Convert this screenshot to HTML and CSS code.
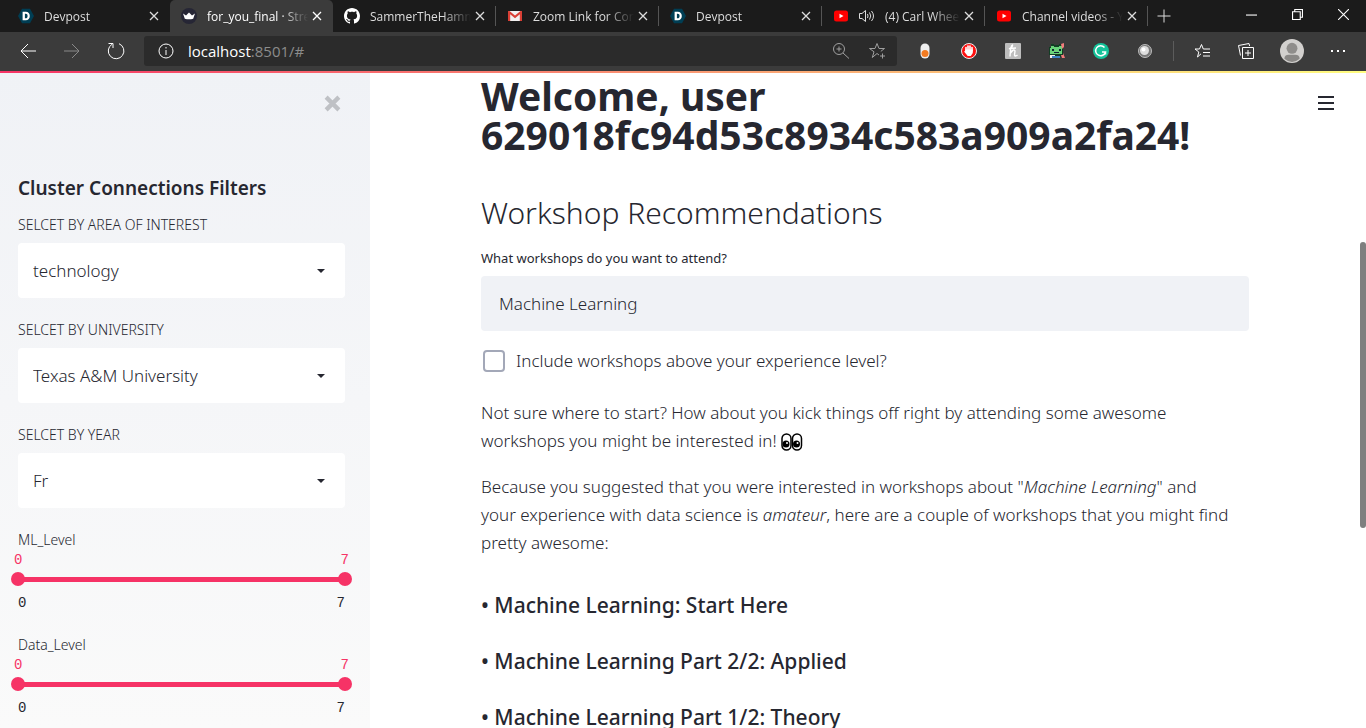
FILE: index.html
```html
<!DOCTYPE html>
<html lang="en">
<head>
  <meta charset="UTF-8" />
  <meta name="viewport" content="width=device-width, initial-scale=1" />
  <title>for_you_final · Streamlit</title>
  <link rel="stylesheet" href="styles.css">
</head>
<body>
  <!-- shared icons -->
  <svg class="sprite" aria-hidden="true">
    <symbol id="devpost" viewBox="0 0 16 16">
      <path d="M4 .8h8L16 8l-4 7.200H4L0 8z" fill="#003e54" />
      <path fill-rule="evenodd" d="M4.600 3.800h3.200c2.500 0 4 1.600 4 4.200s-1.500 4.200-4 4.200H4.600zM6.900 5.700v4.600h.8c1.200 0 1.900-.8 1.900-2.300s-.7-2.300-1.900-2.300z" fill="#fff" />
    </symbol>
    <symbol id="youtube" viewBox="0 0 16 16">
      <rect x="1" y="2.500" width="14" height="11" rx="2.500" fill="#f00" />
      <path d="M6.500 5.700v4.600l4-2.300z" fill="#fff" />
    </symbol>
    <symbol id="close" viewBox="0 0 10 10">
      <path d="M1 1l8 8M9 1l-8 8" stroke="currentColor" stroke-width="1.300" fill="none" />
    </symbol>
  </svg>

  <header class="browser">
    <div class="tabs">
      <div class="tab">
        <svg class="favicon"><use href="#devpost" /></svg>
        <span class="tab-title">Devpost</span>
        <button class="tab-close" aria-label="Close tab"><svg><use href="#close" /></svg></button>
      </div>
      <div class="tab active">
        <svg class="favicon" viewBox="0 0 16 16">
          <circle cx="8" cy="8" r="8" fill="#262635" />
          <path d="M2 5.500l3 2 3-3 3 3 3-2-1.800 5.200q-4.200 1-8.400 0z" fill="#fff" />
        </svg>
        <span class="tab-title">for_you_final · Stre</span>
        <button class="tab-close" aria-label="Close tab"><svg><use href="#close" /></svg></button>
      </div>
      <div class="tab">
        <svg class="favicon" viewBox="0 0 16 16">
          <path fill="#fff" d="M8 0C3.580 0 0 3.580 0 8c0 3.540 2.290 6.530 5.470 7.590.4.070.55-.17.55-.38 0-.19-.01-.82-.01-1.490-2.010.37-2.530-.49-2.690-.94-.09-.23-.48-.94-.82-1.130-.28-.15-.68-.52-.01-.53.63-.01 1.080.58 1.230.82.72 1.210 1.870.87 2.330.66.070-.52.28-.87.51-1.070-1.780-.2-3.640-.89-3.640-3.950 0-.87.31-1.590.82-2.150-.08-.2-.36-1.020.08-2.120 0 0 .67-.21 2.200.82.64-.18 1.320-.27 2-.27s1.360.09 2 .27c1.530-1.040 2.200-.82 2.200-.82.44 1.100.16 1.920.08 2.120.51.56.82 1.270.82 2.150 0 3.070-1.870 3.750-3.650 3.950.29.25.54.73.54 1.480 0 1.070-.01 1.930-.01 2.200 0 .21.15.46.55.38A8.010 8.010 0 0 0 16 8c0-4.420-3.580-8-8-8z" />
        </svg>
        <span class="tab-title">SammerTheHamm</span>
        <button class="tab-close" aria-label="Close tab"><svg><use href="#close" /></svg></button>
      </div>
      <div class="tab">
        <svg class="favicon" viewBox="0 0 16 16">
          <path d="M1 3h14v10H1z" fill="#f1f1f1" />
          <path d="M1 13V3h1.500L8 7.500 13.500 3H15v10h-2.200V6.300L8 10.200 3.200 6.300V13z" fill="#d93f35" />
        </svg>
        <span class="tab-title">Zoom Link for Con</span>
        <button class="tab-close" aria-label="Close tab"><svg><use href="#close" /></svg></button>
      </div>
      <div class="tab">
        <svg class="favicon"><use href="#devpost" /></svg>
        <span class="tab-title">Devpost</span>
        <button class="tab-close" aria-label="Close tab"><svg><use href="#close" /></svg></button>
      </div>
      <div class="tab">
        <svg class="favicon"><use href="#youtube" /></svg>
        <svg class="favicon" viewBox="0 0 16 16" fill="none" stroke="#ddd">
          <path d="M.5 5.500v5h2.500l3.500 3v-11l-3.500 3zM8.500 6q1 2 0 4M10.500 4.500q2.500 3.500 0 7M12.500 3q4 5 0 10" />
        </svg>
        <span class="tab-title">(4) Carl Whee</span>
        <button class="tab-close" aria-label="Close tab"><svg><use href="#close" /></svg></button>
      </div>
      <div class="tab">
        <svg class="favicon"><use href="#youtube" /></svg>
        <span class="tab-title">Channel videos - Y</span>
        <button class="tab-close" aria-label="Close tab"><svg><use href="#close" /></svg></button>
      </div>
      <button class="new-tab" aria-label="New tab">
        <svg viewBox="0 0 14 14"><path d="M7 .5v13M.5 7h13" /></svg>
      </button>
      <div class="window-controls">
        <button aria-label="Minimize"><svg viewBox="0 0 10 10"><path d="M0 5.500h10" /></svg></button>
        <button aria-label="Restore"><svg viewBox="0 0 10 10"><path d="M.5 2.500h7v7h-7zM2.500 2.500v-2h7v7h-2" /></svg></button>
        <button aria-label="Close"><svg viewBox="0 0 10 10"><path d="M0 0l10 10M10 0L0 10" /></svg></button>
      </div>
    </div>

    <div class="toolbar">
      <div class="nav">
        <button aria-label="Back"><svg viewBox="0 0 20 20"><path d="M18 10H3M10 3l-7 7 7 7" /></svg></button>
        <button aria-label="Forward" disabled><svg viewBox="0 0 20 20"><path d="M2 10h15M10 3l7 7-7 7" /></svg></button>
        <button aria-label="Refresh"><svg viewBox="0 0 20 20"><path d="M13 2.700A7.800 7.800 0 1 1 6 3.300M2.500 2.500h4.500v4.500" /></svg></button>
      </div>
      <div class="address">
        <svg class="tool-icon" viewBox="0 0 20 20"><circle cx="10" cy="10" r="7" /><path d="M10 9v5M10 6v1.500" /></svg>
        <a class="url" href="#">localhost<span>:8501/#</span></a>
        <button class="dim" aria-label="Zoom"><svg viewBox="0 0 20 20"><circle cx="8" cy="8" r="5.500" /><path d="M12 12l6 5.500M8 5.500v5M5.500 8h5" /></svg></button>
        <button class="dim" aria-label="Add to favorites"><svg viewBox="0 0 20 20"><path d="M12 14l-2-1.500L5.300 16.500l1.700-5.700L2.500 7.500h5.500L10 2.500l2 5h5.500l-3.700 2.900M15.500 12.500v5M13 15h5" /></svg></button>
      </div>
      <div class="extensions">
        <button aria-label="Toggle extension"><svg viewBox="0 0 20 20"><rect x="5.500" y="2.500" width="9" height="15" rx="4.500" fill="#eee" stroke="none" /><circle cx="10" cy="12.500" r="3.500" fill="#f47b20" stroke="none" /></svg></button>
        <button aria-label="Ad blocker"><svg viewBox="0 0 20 20"><circle cx="10" cy="10" r="7.500" fill="#f11" stroke="#eee" /><path d="M7 10V6.500M9 9V5M11 9V5M13 10V6.500" stroke="#fff" stroke-width="1.600" stroke-linecap="round" /><path d="M6.200 8.500h7.600v3.500l-2 3H8.700l-3.700-4.500 1.200-.5z" fill="#fff" stroke="none" /></svg></button>
        <button aria-label="Honey"><svg viewBox="0 0 20 20"><rect x="2" y="2" width="16" height="16" rx="1" fill="#bdbdbd" stroke="none" /><path d="M6 8q4-2 3.500-4-2 0-2.500 11.500M7.500 12q3.500-5 4.500-2l-.5 4q.5 2 3 0M6.500 7.500l6.500-.5" stroke="#fff" stroke-width="1.400" /></svg></button>
        <button aria-label="Pixel frog"><svg viewBox="0 0 20 20"><path d="M4 3h3v1h5V3h3v2h1v9h-2v2H4v-2H2V6h2z" fill="#123d24" stroke="none" /><path d="M4 5h3v1h5V5h3v8H3V7h1z" fill="#69d27a" stroke="none" /><path d="M5 8h2v2H5zM12 8h2v2h-2zM7 11h5v1H7z" fill="#123" stroke="none" /><path d="M3 14h5v3H3z" fill="#eee" stroke="none" /><path d="M5 15h8v2H5z" fill="#3d83c5" stroke="none" /><path d="M14 3l3-1v4l-2 2zM14 14h2v-2l2 5h-3z" fill="#f47c7c" stroke="none" /></svg></button>
        <button aria-label="Grammarly"><svg viewBox="0 0 20 20"><circle cx="10" cy="10" r="8" fill="#15c39a" stroke="none" /><path d="M13.500 6.500a5 5 0 1 0 1 4.500h-3.500M14.500 11v2.500" stroke="#fff" stroke-width="1.500" /></svg></button>
        <button aria-label="Sphere"><svg viewBox="0 0 20 20"><circle cx="10" cy="10" r="6.500" fill="#777" stroke="#bbb" /><circle cx="9.500" cy="9.500" r="4.500" fill="#ddd" stroke="none" /><circle cx="8.500" cy="8.500" r="2" fill="#fff" stroke="none" /></svg></button>
      </div>
      <div class="profile-tools">
        <button aria-label="Favorites"><svg viewBox="0 0 20 20"><path d="M9 12.800L5.500 16l1.300-5L3 8h4.500L9.500 3.500 11.300 8H18M11 11.500h7M11 15h7" /></svg></button>
        <button aria-label="Collections"><svg viewBox="0 0 20 20"><path d="M6.500 6.500h11v11h-11zM12 9v6M9 12h6M4.500 14.500l-2-10L13 2.500l.6 2.500" /></svg></button>
        <button class="avatar" aria-label="Profile"><svg viewBox="0 0 22 22"><circle cx="11" cy="11" r="11" fill="#d2d0ce" stroke="none" /><circle cx="11" cy="8.500" r="5" fill="#8f8d8b" stroke="none" /><path d="M4 18q0-3.500 4-3.500h6q4 0 4 3.500-7 6-14 0z" fill="#8a8886" stroke="none" /></svg></button>
        <button aria-label="Settings and more"><svg viewBox="0 0 20 20"><path d="M3 9h2v2H3zM9 9h2v2H9zM15 9h2v2h-2z" fill="#fff" stroke="none" /></svg></button>
      </div>
    </div>
  </header>

  <div class="app">
    <aside class="sidebar">
      <button class="sidebar-close" aria-label="Close sidebar">
        <svg viewBox="0 0 16 16"><path d="M2 2l12 12M14 2L2 14" /></svg>
      </button>
      <h3>Cluster Connections Filters</h3>

      <div class="field">
        <label for="interest">SELCET BY AREA OF INTEREST</label>
        <div class="select">
          <select id="interest"><option>technology</option></select>
        </div>
      </div>
      <div class="field">
        <label for="university">SELCET BY UNIVERSITY</label>
        <div class="select">
          <select id="university"><option>Texas A&amp;M University</option></select>
        </div>
      </div>
      <div class="field">
        <label for="year">SELCET BY YEAR</label>
        <div class="select">
          <select id="year"><option>Fr</option></select>
        </div>
      </div>

      <div class="field">
        <label for="ml-min">ML_Level</label>
        <div class="slider">
          <div class="slider-values"><output for="ml-min">0</output><output for="ml-max">7</output></div>
          <div class="slider-track">
            <input type="range" id="ml-min" min="0" max="7" value="0" />
            <input type="range" id="ml-max" min="0" max="7" value="7" aria-label="ML_Level maximum" />
          </div>
          <div class="slider-ends"><span>0</span><span>7</span></div>
        </div>
      </div>
      <div class="field">
        <label for="data-min">Data_Level</label>
        <div class="slider">
          <div class="slider-values"><output for="data-min">0</output><output for="data-max">7</output></div>
          <div class="slider-track">
            <input type="range" id="data-min" min="0" max="7" value="0" />
            <input type="range" id="data-max" min="0" max="7" value="7" aria-label="Data_Level maximum" />
          </div>
          <div class="slider-ends"><span>0</span><span>7</span></div>
        </div>
      </div>
    </aside>

    <main class="main">
      <div class="block">
        <h1>Welcome, user 629018fc94d53c8934c583a909a2fa24!</h1>
        <h2>Workshop Recommendations</h2>
        <label class="text-label" for="workshops">What workshops do you want to attend?</label>
        <input class="text-input" type="text" id="workshops" value="Machine Learning" />
        <label class="checkbox"><input type="checkbox" /> Include workshops above your experience level?</label>
        <p>Not sure where to start? How about you kick things off right by attending some awesome workshops you might be interested in!
          <svg class="eyes" viewBox="0 0 22 18" role="img" aria-label="eyes"><g fill="#fff" stroke="#000" stroke-width="1.500"><rect x="1" y="1" width="9" height="16" rx="4.500" /><rect x="11.500" y="1" width="9" height="16" rx="4.500" /></g><circle cx="5" cy="11" r="3.500" /><circle cx="15.500" cy="11" r="3.500" /><g fill="#fff"><circle cx="6" cy="10" r="1" /><circle cx="16.500" cy="10" r="1" /></g></svg></p>
        <p>Because you suggested that you were interested in workshops about "<em>Machine Learning</em>" and your experience with data science is <em>amateur</em>, here are a couple of workshops that you might find pretty awesome:</p>
        <h4>• Machine Learning: Start Here</h4>
        <h4>• Machine Learning Part 2/2: Applied</h4>
        <h4>• Machine Learning Part 1/2: Theory</h4>
      </div>
    </main>

    <button class="menu" aria-label="Menu">
      <svg viewBox="0 0 16 16"><path d="M0 2h16M0 8h16M0 14h16" /></svg>
    </button>
    <div class="scroll-thumb"></div>
  </div>
</body>
</html>
```

FILE: styles.css
```css
* {
  box-sizing: border-box;
}
body {
  margin: 0;
  height: 100vh;
  display: flex;
  flex-direction: column;
  overflow: hidden;
  font-family: "Noto Sans", sans-serif;
  color: #262730;
  background: #fff;
}
button {
  border: none;
  padding: 0;
  background: none;
  color: inherit;
  cursor: pointer;
}
svg {
  display: block;
}
.sprite {
  position: absolute;
  width: 0;
  height: 0;
}

/* Browser window */
.browser {
  flex: none;
  background: #3b3b3b;
  color: #fff;
}
.tabs {
  display: flex;
  height: 32px;
  padding-left: 7px;
  background: #1b1b1b;
}
.tab {
  display: flex;
  align-items: center;
  gap: 10px;
  flex: 0 1 163px;
  min-width: 0;
  padding: 0 11px;
  font-family: "Open Sans", sans-serif;
  font-size: 12px;
  color: #ddd;
  background: linear-gradient(#555, #555) right center / 1px 20px no-repeat;
}
.tab:first-child {
  background: none;
}
.tab.active {
  background: #3b3b3b;
  border-radius: 5px 5px 0 0;
  color: #fff;
}
.favicon {
  flex: none;
  width: 16px;
  height: 16px;
}
.tab-title {
  flex: 1;
  margin-right: -6px;
  overflow: hidden;
  white-space: nowrap;
  -webkit-mask-image: linear-gradient(to left, transparent, #000 28px);
  mask-image: linear-gradient(to left, transparent, #000 28px);
}
.tab-close svg {
  width: 10px;
  height: 10px;
}
.new-tab svg {
  width: 14px;
  height: 14px;
  margin: 0 9px;
  stroke: #ddd;
}
.window-controls {
  display: flex;
  margin-left: auto;
}
.window-controls button {
  width: 46px;
  height: 28px;
}
.window-controls svg {
  width: 11px;
  height: 11px;
  margin: auto;
  fill: none;
  stroke: #fff;
}
.toolbar {
  display: flex;
  align-items: center;
  height: 39px;
  padding-bottom: 1px;
}
.toolbar svg {
  width: 20px;
  height: 20px;
  fill: none;
  stroke: #fff;
}
.nav {
  display: flex;
  gap: 24px;
  padding: 0 18px;
}
.nav button:disabled {
  opacity: 0.4;
}
.address {
  flex: 1;
  display: flex;
  align-items: center;
  gap: 16px;
  height: 30px;
  padding: 0 10px 0 12px;
  border-radius: 3px;
  background: #2b2b2b;
}
.url {
  flex: 1;
  margin-left: -4px;
  font-family: "Open Sans", sans-serif;
  font-size: 15px;
  color: #fff;
  text-decoration: none;
}
.url span {
  color: #8c8c8c;
}
.dim {
  opacity: 0.55;
}
.extensions {
  display: flex;
  gap: 24px;
  padding: 0 18px;
  border-right: 1px solid #5c5c5c;
}
.profile-tools {
  display: flex;
  align-items: center;
  gap: 24px;
  padding: 0 18px;
}
.profile-tools .avatar svg {
  width: 24px;
  height: 24px;
}

/* Streamlit app */
.app {
  position: relative;
  flex: 1;
  min-height: 0;
  display: flex;
}
.app::before {
  content: "";
  position: absolute;
  top: 0;
  left: 0;
  right: 0;
  height: 2px;
  background: linear-gradient(to right, #f63366, #fffd80);
}
.sidebar {
  flex: none;
  width: 370px;
  padding: 24px 25px 0 18px;
  background: linear-gradient(#f0f2f6, #fafafa);
  overflow: hidden;
}
.sidebar-close {
  display: block;
  margin: 0 4px 64px auto;
}
.sidebar-close svg {
  width: 17px;
  height: 17px;
  stroke: #bfc1c5;
  stroke-width: 4px;
}
h3 {
  margin: 0 0 14px;
  font-size: 19px;
  font-weight: 600;
  line-height: 25px;
}
.field {
  margin-bottom: 22px;
}
.field label,
.text-label {
  display: block;
  font-size: 14px;
  font-weight: 300;
  line-height: 20px;
}
.select {
  display: grid;
  align-items: center;
  margin-top: 8px;
}
.select select,
.select::after {
  grid-area: 1 / 1;
}
.select::after {
  content: "";
  justify-self: end;
  margin-right: 20px;
  border: 4px solid transparent;
  border-top-color: #262730;
  border-bottom: none;
  pointer-events: none;
}
select,
.text-input {
  width: 100%;
  height: 55px;
  padding: 0 15px;
  border: none;
  border-radius: 4px;
  font: inherit;
  font-size: 17px;
  font-weight: 300;
  color: inherit;
  background: #fff;
  appearance: none;
}
.slider {
  font-family: "Liberation Mono", monospace;
  font-size: 14px;
  line-height: 20px;
}
.slider-values,
.slider-ends {
  display: flex;
  justify-content: space-between;
}
.slider-values {
  margin: 0 -4px;
  color: #f63366;
}
.slider-track {
  display: grid;
  align-items: center;
  height: 18px;
  margin: 0 -7px;
  background: linear-gradient(#f63366, #f63366) center / calc(100% - 14px) 5px no-repeat;
}
.slider-ends {
  padding-top: 5px;
}
input[type="range"] {
  grid-area: 1 / 1;
  width: 100%;
  height: 14px;
  margin: 0;
  appearance: none;
  background: none;
  pointer-events: none;
}
input[type="range"]::-webkit-slider-thumb {
  appearance: none;
  width: 14px;
  height: 14px;
  border-radius: 50%;
  background: #f63366;
  pointer-events: auto;
}

.main {
  flex: 1;
  min-width: 0;
  padding: 5px 22px 0 16px;
  overflow: hidden;
}
.block {
  max-width: 768px;
  margin: 0 auto;
}
h1 {
  margin: 0 0 40px;
  font-size: 39px;
  font-weight: 700;
  line-height: 39px;
}
h2 {
  margin: 0 0 16px;
  font-size: 30px;
  font-weight: 300;
  line-height: 38px;
}
.text-label {
  margin-bottom: 8px;
  font-size: 13px;
  font-weight: 400;
}
.text-input {
  padding: 0 18px;
  background: #f0f2f6;
}
.checkbox {
  display: flex;
  align-items: center;
  gap: 11px;
  margin: 16px 0 24px;
  padding-left: 2px;
  font-size: 17px;
  font-weight: 300;
  line-height: 28px;
}
.checkbox input {
  width: 22px;
  height: 22px;
  margin: 0;
  appearance: none;
  border: 2px solid #a3a8b8;
  border-radius: 4px;
  background: #fff;
}
p {
  margin: 0 0 18px;
  padding-right: 16px;
  font-size: 17px;
  font-weight: 300;
  line-height: 28px;
}
.eyes {
  display: inline-block;
  width: 22px;
  height: 18px;
  vertical-align: -4px;
}
h4 {
  margin: 34px 0 28px;
  font-size: 21px;
  font-weight: 500;
  line-height: 28px;
}
h4 + h4 {
  margin-top: 0;
}

/* Laid over the page */
.menu {
  position: absolute;
  top: 24px;
  right: 32px;
}
.menu svg {
  width: 16px;
  height: 16px;
  stroke: #262730;
  stroke-width: 2px;
}
.scroll-thumb {
  position: absolute;
  top: 26%;
  right: 0;
  width: 6px;
  height: 286px;
  border-radius: 3px;
  background: #7f7f7f;
}
```
